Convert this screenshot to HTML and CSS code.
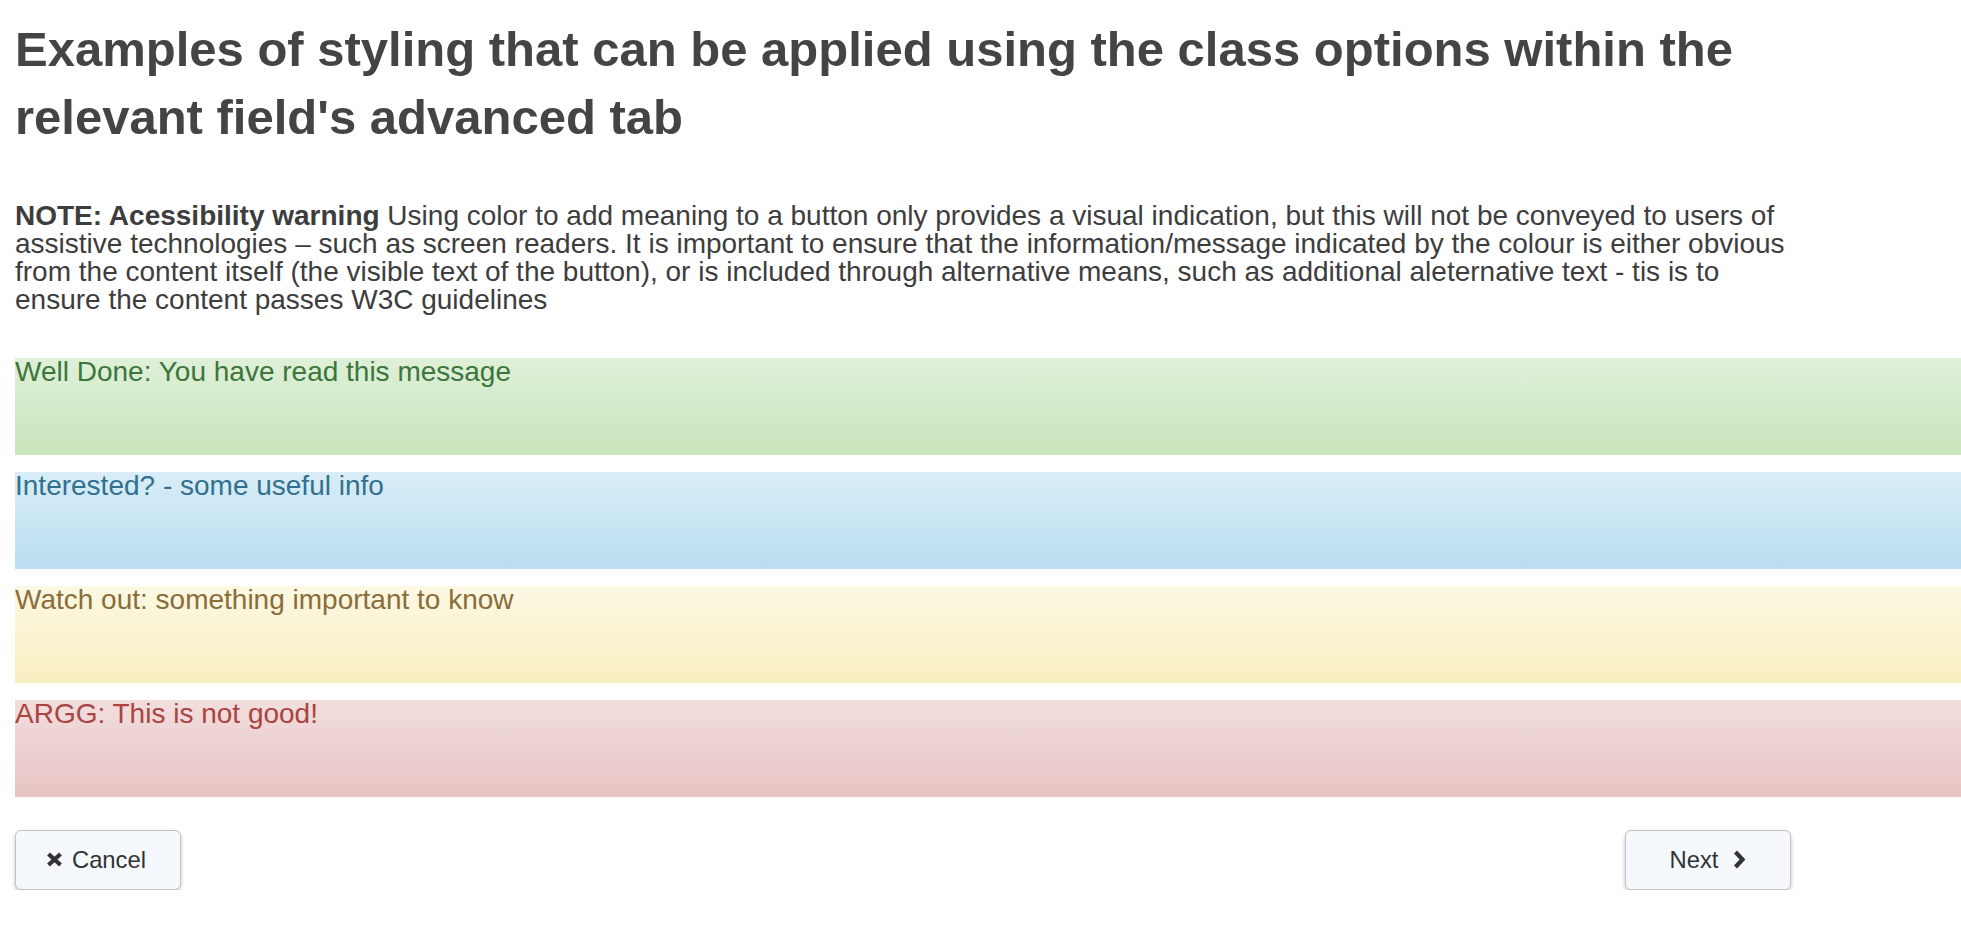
FILE: index.html
```html
<!DOCTYPE html>
<html lang="en">
<head>
    <meta charset="UTF-8">
    <meta name="viewport" content="width=device-width, initial-scale=1.0">
    <title>Styling examples</title>
    <link rel="stylesheet" href="styles.css">
</head>
<body>
    <div class="intro">
        <h1>Examples of styling that can be applied using the class options within the relevant field's advanced tab</h1>

        <p class="note"><strong>NOTE: Acessibility warning</strong> Using color to add meaning to a button only provides a visual indication, but this will not be conveyed to users of assistive technologies &ndash; such as screen readers. It is important to ensure that the information/message indicated by the colour is either obvious from the content itself (the visible text of the button), or is included through alternative means, such as additional aleternative text - tis is to ensure the content passes W3C guidelines</p>
    </div>

    <!-- alert examples -->
    <div class="alerts">
        <div class="alert alert-success">Well Done: You have read this message</div>
        <div class="alert alert-info">Interested? - some useful info</div>
        <div class="alert alert-warning">Watch out: something important to know</div>
        <div class="alert alert-danger">ARGG: This is not good!</div>
    </div>

    <div class="actions">
        <button type="button" class="btn">
            <svg class="icon icon-times" viewBox="0 0 17 15" aria-hidden="true">
                <path d="M2.5 2 14.5 13M14.5 2 2.5 13"/>
            </svg>
            Cancel
        </button>
        <button type="button" class="btn">
            Next
            <svg class="icon icon-chevron" viewBox="0 0 14 19" aria-hidden="true">
                <path d="M3.5 2 10.5 9.5 3.5 17"/>
            </svg>
        </button>
    </div>
</body>
</html>
```

FILE: styles.css
```css
body {
    margin: 0;
    padding: 0 0 0 15px;
    font-family: 'Liberation Sans', Arial, sans-serif;
    color: #444;
    background-color: #fff;
}

.intro {
    max-width: 1776px;
}

h1 {
    margin: 16px 0 0;
    font-size: 49px;
    line-height: 67.5px;
    font-weight: bold;
    color: #444;
}

.note {
    margin: 51px 0 44px;
    font-size: 28px;
    line-height: 27.9px;
    color: #3d3d3d;
}

.alert {
    height: 97px;
    margin-bottom: 17px;
    font-size: 28px;
    line-height: 1;
}

.alert-success {
    color: #3c763d;
    background-image: linear-gradient(to bottom, #dff0d8 0, #c8e5bc 100%);
}

.alert-info {
    color: #31708f;
    background-image: linear-gradient(to bottom, #d9edf7 0, #b9def0 100%);
}

.alert-warning {
    color: #8a6d3b;
    background-image: linear-gradient(to bottom, #fcf8e3 0, #f8efc0 100%);
}

.alert-danger {
    color: #a94442;
    background-image: linear-gradient(to bottom, #f2dede 0, #e7c3c3 100%);
}

.actions {
    max-width: 1776px;
    display: flex;
    justify-content: space-between;
    margin-top: 33px;
}

.btn {
    display: flex;
    align-items: center;
    justify-content: center;
    gap: 9px;
    min-width: 166px;
    height: 60px;
    padding: 0 20px;
    font-family: 'Liberation Sans', Arial, sans-serif;
    font-size: 23.8px;
    color: #333;
    background-color: #f5f9fd;
    border: 1px solid #c2c2c2;
    border-radius: 6px;
    box-shadow: 0 2px 4px rgba(0, 0, 0, 0.22);
    cursor: pointer;
}

.icon {
    fill: none;
    stroke: #333;
    stroke-width: 4.2;
}

.icon-times {
    width: 17px;
    height: 15px;
    margin-left: -4px;
}

.icon-chevron {
    width: 14px;
    height: 19px;
    margin-left: 5px;
}
```
